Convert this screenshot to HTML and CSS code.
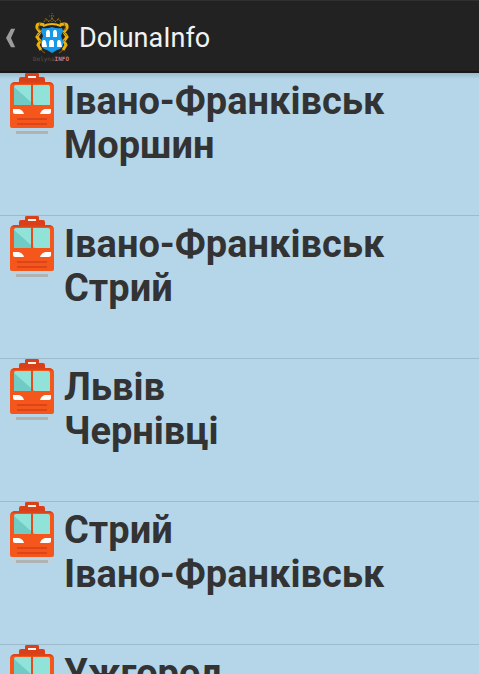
FILE: index.html
```html
<!DOCTYPE html>
<html lang="uk">
<head>
<meta charset="utf-8">
<meta name="viewport" content="width=device-width, initial-scale=1">
<title>DolunaInfo</title>
<link rel="stylesheet" href="styles.css">
</head>
<body>
<svg class="sprite" aria-hidden="true">
  <symbol id="train" viewBox="0 0 44 66">
    <path fill="#d93f18" d="M15 1q0-1 2-1h10q2 0 2 1v3h4q2 0 2 2v4H9V6q0-2 2-2h4z"/>
    <rect x="18" y="3" width="8" height="2" fill="#fff3e9"/>
    <path fill="#f4561c" d="M4 9h36q4 1 4 5v39q0 2-2 2H2q-2 0-2-2V14q0-4 4-5z"/>
    <path fill="#dc4519" d="M4 9h36q3 1 4 4-2-2-4-2H4q-3 0-4 2 1-3 4-4z"/>
    <path fill="#91e3da" d="M6 12h15v20H4V14q0-2 2-2zM23 12h15q2 0 2 2v18H23z"/>
    <path fill="#70cbc5" d="M4 14l17 15v3H4zM23 30l2 2h-2z"/>
    <path fill="#e24d1b" d="M21 11h2v21h-2z"/>
    <path fill="#dc4519" d="M7 45h30v2H7zM7 50h30v2H7z"/>
    <path fill="#fff" d="M3 36h6q4 1 5 5H5q-2 0-2-2zM41 36h-6q-4 1-5 5h9q2 0 2-2z"/>
    <path fill="#c9cfd1" d="M3 58h38l2 3-4-1H5l-4 1z"/>
    <rect x="6" y="58" width="32" height="3" fill="#b1b3b2"/>
  </symbol>
</svg>
<div class="app">
  <header class="bar">
    <a class="home" href="#" aria-label="Назад">
      <svg class="back" viewBox="0 0 12 24" aria-hidden="true"><path d="M6 1h5L6 12l5 11H6L0 12z" fill="#9b9b9b"/></svg>
      <span class="logo">
        <svg class="crest" viewBox="0 0 40 42" aria-hidden="true">
          <path d="M12 12q1-5 4-6l2 3 3-4 3 4 3-3q3 1 3 6" fill="none" stroke="#a97b0b" stroke-dasharray="2 1"/>
          <path d="M21 0v9M18 3h6M14 5l2 3M28 5l-2 3" fill="none" stroke="#8e680c" stroke-dasharray="1 1"/>
          <path d="M12 13q9-4 18 0" fill="none" stroke="#f0b60b" stroke-width="2"/>
          <path d="M13 12Q5 9 6 15l3 4-3 5 3 4-2 4 3 5M29 12q8-3 7 3l-3 4 3 5-3 4 2 4-3 5" fill="none" stroke="#eab00c" stroke-width="3"/>
          <path d="M9 10l-2 6 4 2-5 5M33 10l2 6-4 2 5 5M8 27l4 3M34 27l-4 3M10 37l4 3M32 37l-4 3" fill="none" stroke="#8e6205"/>
          <path d="M11 15q5 1 10-1 5 2 10 1l1 3-2 5 2 5v4q-1 4-6 5l-5 3-5-3q-5-1-6-5v-4l2-5-2-5z" fill="#1599e8"/>
          <path fill="#fff" d="M15 19l1-2h2l1 2v5h-4zM22 19l1-2h2l1 2v5h-4zM11 29l1-2h2l1 2 1 5h-5zM18 29l1-2h3l1 2v5h-5zM26 29l1-2h2l1 2 1 5h-5z"/>
        </svg>
        <span class="logo-name">Dolyna<b>INFO</b></span>
      </span>
    </a>
    <h1 class="title">DolunaInfo</h1>
  </header>
  <main class="content">
    <ul class="routes">
      <li class="route"><svg class="train" aria-hidden="true"><use href="#train"/></svg><p class="name">Івано-Франківськ<br>Моршин</p></li>
      <li class="route"><svg class="train" aria-hidden="true"><use href="#train"/></svg><p class="name">Івано-Франківськ<br>Стрий</p></li>
      <li class="route"><svg class="train" aria-hidden="true"><use href="#train"/></svg><p class="name">Львів<br>Чернівці</p></li>
      <li class="route"><svg class="train" aria-hidden="true"><use href="#train"/></svg><p class="name">Стрий<br>Івано-Франківськ</p></li>
      <li class="route"><svg class="train" aria-hidden="true"><use href="#train"/></svg><p class="name">Ужгород</p></li>
    </ul>
  </main>
</div>
</body>
</html>
```
FILE: styles.css
```css
* {
  box-sizing: border-box;
}

body {
  margin: 0;
  background: #b5d6e9;
  font-family: Roboto, "Liberation Sans", sans-serif;
}

.sprite {
  display: none;
}

.app {
  display: flex;
  flex-direction: column;
  height: 100vh;
}

.bar {
  display: flex;
  flex: none;
  align-items: center;
  gap: 8px;
  padding: 12px 6px 8px;
  border-top: 1px solid #303030;
  border-bottom: 2px solid #17181b;
  background: #222;
}

.home {
  display: flex;
  align-items: center;
  gap: 15px;
  text-decoration: none;
}

.back {
  width: 10px;
  height: 22px;
}

.logo {
  display: flex;
  flex-direction: column;
  align-items: center;
  width: 40px;
}

.crest {
  width: 40px;
  height: 42px;
}

.logo-name {
  color: #555;
  font: 6px/8px "DejaVu Sans Mono", monospace;
}

.logo-name b {
  color: #d07a7a;
}

.title {
  margin: 0;
  color: #f2f2f2;
  font-size: 27px;
  font-weight: 400;
  line-height: 32px;
}

.content {
  flex: 1;
  min-height: 0;
  overflow-y: auto;
  scrollbar-width: none;
  background: linear-gradient(#9bb9ca, #b5d6e9 6px);
}

.routes {
  margin: 0;
  padding: 0;
  list-style: none;
}

.route {
  display: flex;
  align-items: flex-start;
  gap: 10px;
  min-height: 143px;
  padding: 0 10px;
  border-bottom: 1px solid #9dbbcd;
}

.train {
  flex: none;
  width: 44px;
  height: 66px;
}

.name {
  margin: 0;
  padding-top: 6px;
  color: #333;
  font-size: 38px;
  font-weight: 700;
  line-height: 44px;
}
```
